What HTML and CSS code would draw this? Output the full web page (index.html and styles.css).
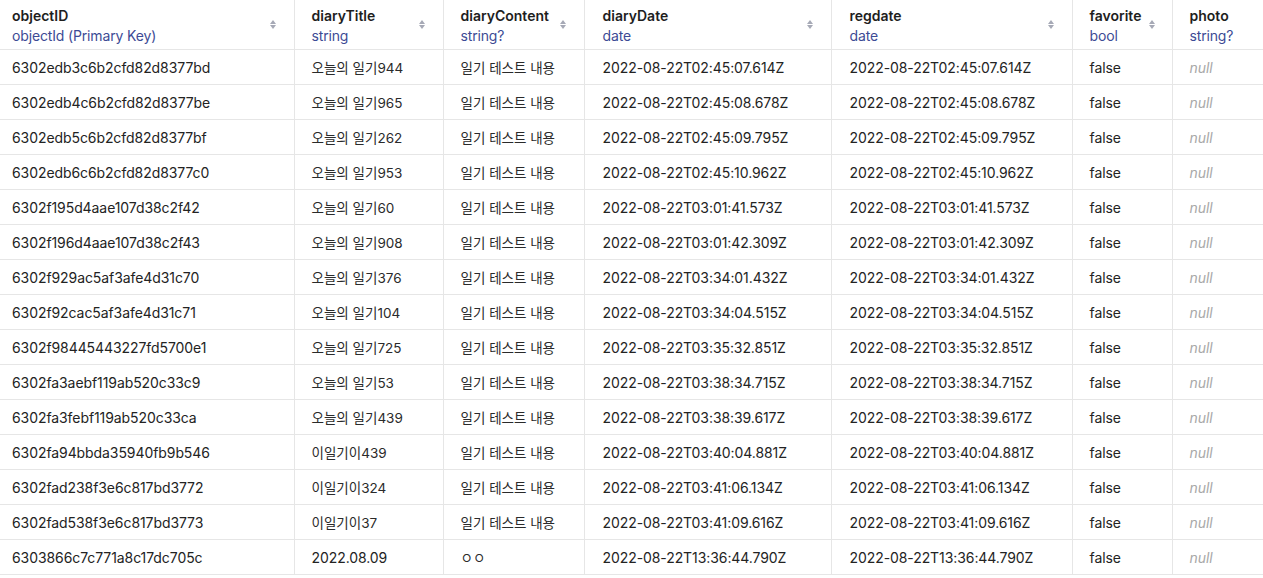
FILE: index.html
```html
<!DOCTYPE html>
<html>
<head>
<meta charset="utf-8">
<link rel="stylesheet" href="styles.css">
</head>
<body>
<table class="grid">
<colgroup>
<col class="c1"><col class="c2"><col class="c3"><col class="c4"><col class="c5"><col class="c6"><col class="c7">
</colgroup>
<thead>
<tr>
<th><div class="hd"><div class="hl"><div class="name">objectID</div><div class="type">objectId (Primary Key)</div></div><span class="sort"></span></div></th>
<th><div class="hd"><div class="hl"><div class="name">diaryTitle</div><div class="type">string</div></div><span class="sort"></span></div></th>
<th><div class="hd"><div class="hl"><div class="name">diaryContent</div><div class="type">string?</div></div><span class="sort"></span></div></th>
<th class="wide"><div class="hd"><div class="hl"><div class="name">diaryDate</div><div class="type">date</div></div><span class="sort"></span></div></th>
<th class="wide"><div class="hd"><div class="hl"><div class="name">regdate</div><div class="type">date</div></div><span class="sort"></span></div></th>
<th><div class="hd"><div class="hl"><div class="name">favorite</div><div class="type">bool</div></div><span class="sort"></span></div></th>
<th><div class="hd"><div class="hl"><div class="name">photo</div><div class="type">string?</div></div></div></th>
</tr>
</thead>
<tbody>
<tr><td>6302edb3c6b2cfd82d8377bd</td><td class="ko">오늘의 일기944</td><td class="ko">일기 테스트 내용</td><td class="wide">2022-08-22T02:45:07.614Z</td><td class="wide">2022-08-22T02:45:07.614Z</td><td>false</td><td class="null">null</td></tr>
<tr><td>6302edb4c6b2cfd82d8377be</td><td class="ko">오늘의 일기965</td><td class="ko">일기 테스트 내용</td><td class="wide">2022-08-22T02:45:08.678Z</td><td class="wide">2022-08-22T02:45:08.678Z</td><td>false</td><td class="null">null</td></tr>
<tr><td>6302edb5c6b2cfd82d8377bf</td><td class="ko">오늘의 일기262</td><td class="ko">일기 테스트 내용</td><td class="wide">2022-08-22T02:45:09.795Z</td><td class="wide">2022-08-22T02:45:09.795Z</td><td>false</td><td class="null">null</td></tr>
<tr><td>6302edb6c6b2cfd82d8377c0</td><td class="ko">오늘의 일기953</td><td class="ko">일기 테스트 내용</td><td class="wide">2022-08-22T02:45:10.962Z</td><td class="wide">2022-08-22T02:45:10.962Z</td><td>false</td><td class="null">null</td></tr>
<tr><td>6302f195d4aae107d38c2f42</td><td class="ko">오늘의 일기60</td><td class="ko">일기 테스트 내용</td><td class="wide">2022-08-22T03:01:41.573Z</td><td class="wide">2022-08-22T03:01:41.573Z</td><td>false</td><td class="null">null</td></tr>
<tr><td>6302f196d4aae107d38c2f43</td><td class="ko">오늘의 일기908</td><td class="ko">일기 테스트 내용</td><td class="wide">2022-08-22T03:01:42.309Z</td><td class="wide">2022-08-22T03:01:42.309Z</td><td>false</td><td class="null">null</td></tr>
<tr><td>6302f929ac5af3afe4d31c70</td><td class="ko">오늘의 일기376</td><td class="ko">일기 테스트 내용</td><td class="wide">2022-08-22T03:34:01.432Z</td><td class="wide">2022-08-22T03:34:01.432Z</td><td>false</td><td class="null">null</td></tr>
<tr><td>6302f92cac5af3afe4d31c71</td><td class="ko">오늘의 일기104</td><td class="ko">일기 테스트 내용</td><td class="wide">2022-08-22T03:34:04.515Z</td><td class="wide">2022-08-22T03:34:04.515Z</td><td>false</td><td class="null">null</td></tr>
<tr><td>6302f98445443227fd5700e1</td><td class="ko">오늘의 일기725</td><td class="ko">일기 테스트 내용</td><td class="wide">2022-08-22T03:35:32.851Z</td><td class="wide">2022-08-22T03:35:32.851Z</td><td>false</td><td class="null">null</td></tr>
<tr><td>6302fa3aebf119ab520c33c9</td><td class="ko">오늘의 일기53</td><td class="ko">일기 테스트 내용</td><td class="wide">2022-08-22T03:38:34.715Z</td><td class="wide">2022-08-22T03:38:34.715Z</td><td>false</td><td class="null">null</td></tr>
<tr><td>6302fa3febf119ab520c33ca</td><td class="ko">오늘의 일기439</td><td class="ko">일기 테스트 내용</td><td class="wide">2022-08-22T03:38:39.617Z</td><td class="wide">2022-08-22T03:38:39.617Z</td><td>false</td><td class="null">null</td></tr>
<tr><td>6302fa94bbda35940fb9b546</td><td class="ko">이일기이439</td><td class="ko">일기 테스트 내용</td><td class="wide">2022-08-22T03:40:04.881Z</td><td class="wide">2022-08-22T03:40:04.881Z</td><td>false</td><td class="null">null</td></tr>
<tr><td>6302fad238f3e6c817bd3772</td><td class="ko">이일기이324</td><td class="ko">일기 테스트 내용</td><td class="wide">2022-08-22T03:41:06.134Z</td><td class="wide">2022-08-22T03:41:06.134Z</td><td>false</td><td class="null">null</td></tr>
<tr><td>6302fad538f3e6c817bd3773</td><td class="ko">이일기이37</td><td class="ko">일기 테스트 내용</td><td class="wide">2022-08-22T03:41:09.616Z</td><td class="wide">2022-08-22T03:41:09.616Z</td><td>false</td><td class="null">null</td></tr>
<tr><td>6303866c7c771a8c17dc705c</td><td>2022.08.09</td><td class="ko">ㅇㅇ</td><td class="wide">2022-08-22T13:36:44.790Z</td><td class="wide">2022-08-22T13:36:44.790Z</td><td>false</td><td class="null">null</td></tr>
</tbody>
</table>
</body>
</html>
```
FILE: styles.css
```css
html, body {
  margin: 0;
  padding: 0;
  background: #ffffff;
}
body {
  font-family: Inter, "Noto Sans CJK KR", sans-serif;
  color: #232323;
  font-size: 14px;
}
.grid {
  border-collapse: collapse;
  table-layout: fixed;
  width: 1263px;
}
.c1 { width: 294px; }
.c2 { width: 149px; }
.c3 { width: 141px; }
.c4 { width: 247px; }
.c5 { width: 241px; }
.c6 { width: 100px; }
.c7 { width: 91px; }
.grid th, .grid td {
  border-right: 1px solid #e6e6e6;
  border-bottom: 1px solid #e6e6e6;
  padding: 0 16px 0 17px;
  text-align: left;
  white-space: nowrap;
  overflow: hidden;
}
.grid th.wide, .grid td.wide {
  padding-left: 18px;
}
.grid th:first-child, .grid td:first-child {
  padding-left: 12px;
}
.grid th:last-child, .grid td:last-child {
  border-right: none;
}
.grid th {
  height: 49px;
  padding-right: 0;
  vertical-align: top;
}
.grid td {
  height: 34px;
  font-size: 14px;
  font-weight: 400;
  letter-spacing: -0.08px;
}
.grid td.ko {
  font-size: 13.5px;
  letter-spacing: 0;
  color: #2a2a2a;
}
.hd {
  display: flex;
  align-items: center;
  justify-content: space-between;
  height: 49px;
}
.hl {
  display: flex;
  flex-direction: column;
  align-self: flex-start;
  padding-top: 6px;
}
.name {
  font-size: 14px;
  font-weight: 600;
  line-height: 20px;
  color: #1e1e1e;
}
.type {
  font-size: 14px;
  font-weight: 400;
  line-height: 20px;
  letter-spacing: -0.15px;
  color: #3d4b95;
}
.sort {
  display: flex;
  flex-direction: column;
  align-items: center;
  gap: 1px;
  width: 7px;
  margin-right: 17px;
  margin-left: 8px;
}
.sort::before, .sort::after {
  content: "";
  display: block;
  width: 0;
  height: 0;
  border-left: 3.5px solid transparent;
  border-right: 3.5px solid transparent;
}
.sort::before {
  border-bottom: 4px solid #a6a9b6;
}
.sort::after {
  border-top: 4px solid #a6a9b6;
}
.grid td.null {
  color: #a8a8a8;
  font-style: italic;
}
```
